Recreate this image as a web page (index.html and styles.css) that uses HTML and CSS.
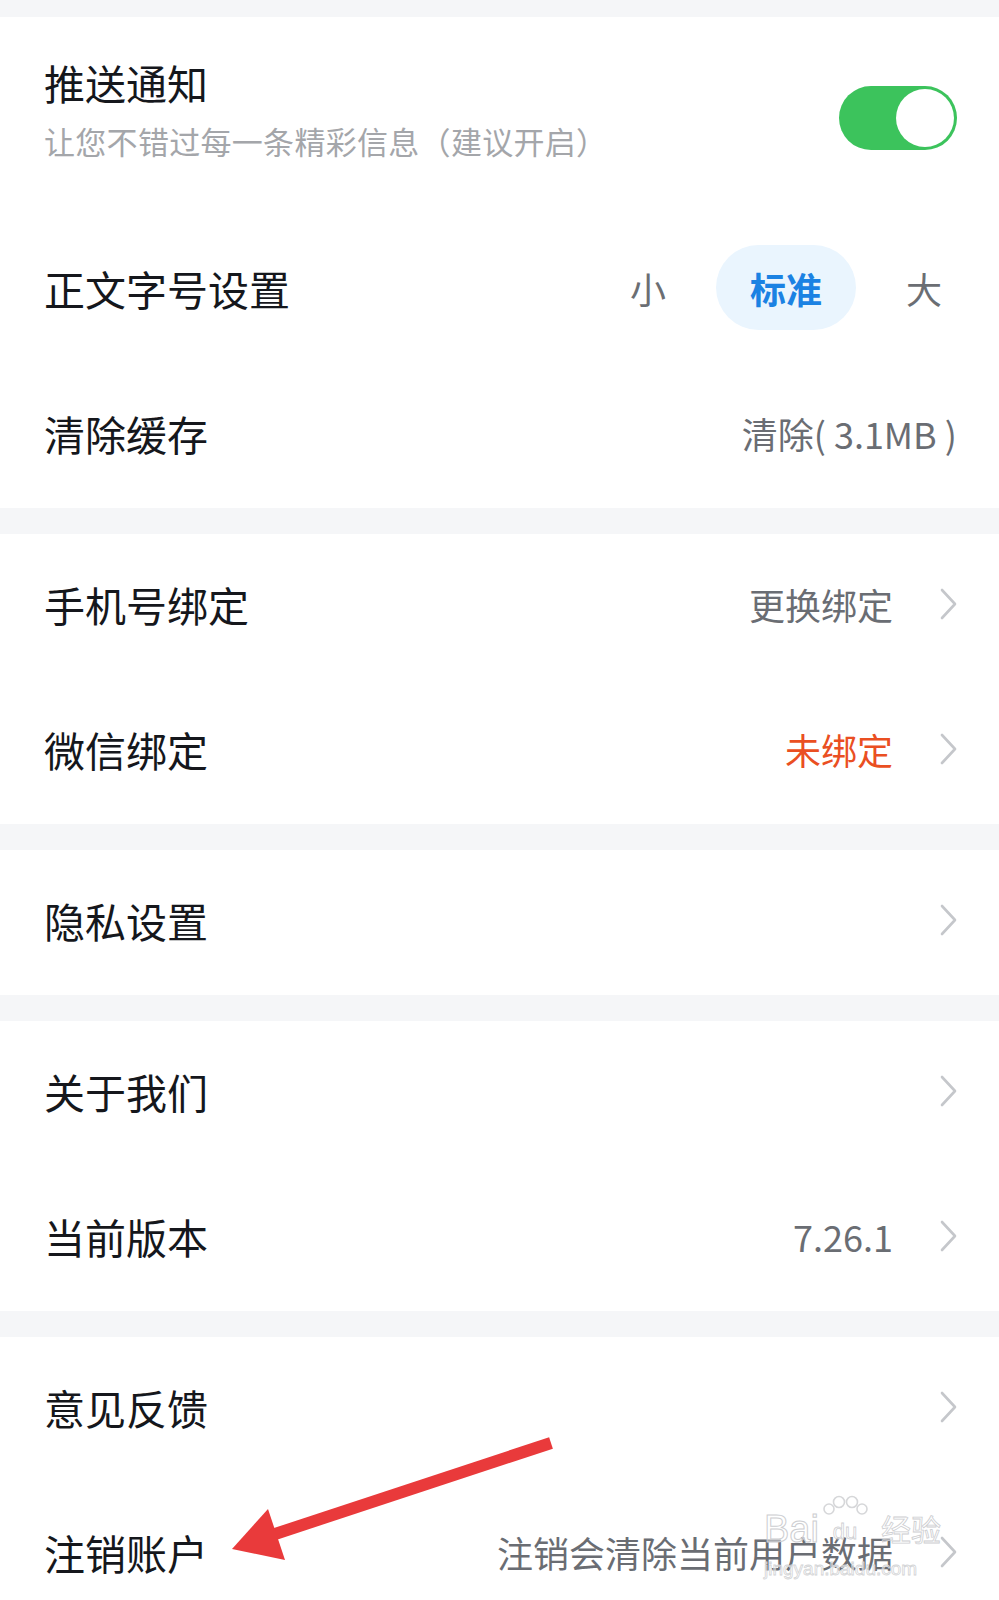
FILE: index.html
```html
<!DOCTYPE html>
<html lang="zh-CN">
<head>
  <meta charset="UTF-8">
  <meta name="viewport" content="width=device-width, initial-scale=1.0">
  <title>设置</title>
  <link rel="stylesheet" href="styles.css">
</head>
<body>
  <div class="page">
    <div class="group">
      <div class="row row-tall">
        <div class="row-text">
          <div class="row-title">推送通知</div>
          <div class="row-sub">让您不错过每一条精彩信息（建议开启）</div>
        </div>
        <span class="switch on"><span class="knob"></span></span>
      </div>
      <div class="row">
        <div class="row-title">正文字号设置</div>
        <div class="size-picker">
          <span class="size-opt">小</span>
          <span class="size-opt active">标准</span>
          <span class="size-opt">大</span>
        </div>
      </div>
      <div class="row">
        <div class="row-title">清除缓存</div>
        <span class="row-value">清除( 3.1MB )</span>
      </div>
    </div>

    <div class="group">
      <div class="row">
        <div class="row-title">手机号绑定</div>
        <div class="row-end">
          <span class="row-value">更换绑定</span>
          <svg class="chevron" viewBox="0 0 17 32"><path d="M2 2 L15 16 L2 30"/></svg>
        </div>
      </div>
      <div class="row">
        <div class="row-title">微信绑定</div>
        <div class="row-end">
          <span class="row-value warn">未绑定</span>
          <svg class="chevron" viewBox="0 0 17 32"><path d="M2 2 L15 16 L2 30"/></svg>
        </div>
      </div>
    </div>

    <div class="group">
      <div class="row">
        <div class="row-title">隐私设置</div>
        <svg class="chevron" viewBox="0 0 17 32"><path d="M2 2 L15 16 L2 30"/></svg>
      </div>
    </div>

    <div class="group">
      <div class="row">
        <div class="row-title">关于我们</div>
        <svg class="chevron" viewBox="0 0 17 32"><path d="M2 2 L15 16 L2 30"/></svg>
      </div>
      <div class="row">
        <div class="row-title">当前版本</div>
        <div class="row-end">
          <span class="row-value">7.26.1</span>
          <svg class="chevron" viewBox="0 0 17 32"><path d="M2 2 L15 16 L2 30"/></svg>
        </div>
      </div>
    </div>

    <div class="group">
      <div class="row">
        <div class="row-title">意见反馈</div>
        <svg class="chevron" viewBox="0 0 17 32"><path d="M2 2 L15 16 L2 30"/></svg>
      </div>
      <div class="row">
        <div class="row-title">注销账户</div>
        <div class="row-end">
          <span class="row-value">注销会清除当前用户数据</span>
          <svg class="chevron" viewBox="0 0 17 32"><path d="M2 2 L15 16 L2 30"/></svg>
        </div>
      </div>
    </div>

    <!-- red annotation arrow drawn over the screenshot -->
    <svg class="annotation" viewBox="0 0 999 1600">
      <line x1="551" y1="1443" x2="272" y2="1535"/>
      <polygon points="232,1549 268,1509 285,1560"/>
    </svg>

    <div class="watermark">
      <div class="wm-main">
        <span class="wm-bai">Bai</span>
        <span class="wm-paw">
          <svg viewBox="0 0 50 24">
            <circle cx="9" cy="14" r="5"/>
            <circle cx="19" cy="7" r="5.5"/>
            <circle cx="32" cy="7" r="5.5"/>
            <circle cx="42" cy="14" r="5"/>
          </svg>
          <span class="wm-du">du</span>
        </span>
        <span class="wm-jy">经验</span>
      </div>
      <div class="wm-url">jingyan.baidu.com</div>
    </div>
  </div>
</body>
</html>
```

FILE: styles.css
```css
body {
  margin: 0;
  padding: 0;
  background-color: #f5f6f8;
  font-family: "Noto Sans CJK SC", "Noto Sans", sans-serif;
}

.page {
  position: relative;
  width: 999px;
  height: 1600px;
  padding-top: 17px;
  box-sizing: border-box;
  overflow: hidden;
}

.group {
  background-color: #fff;
  margin-bottom: 26px;
}

.row {
  display: flex;
  align-items: center;
  justify-content: space-between;
  height: 145px;
  padding: 0 42px 6px 44px;
  box-sizing: border-box;
}

.row-tall {
  height: 201px;
  padding-bottom: 18px;
}

.row-title {
  font-size: 41px;
  line-height: 56px;
  color: #15171c;
}

.row-sub {
  margin-top: 9px;
  font-size: 31px;
  line-height: 44px;
  color: #a4a6aa;
  letter-spacing: 0.3px;
}

.row-end {
  display: flex;
  align-items: center;
  gap: 47px;
}

.row-value {
  font-size: 36px;
  line-height: 50px;
  color: #6a6d73;
}

.row-value.warn {
  color: #ea4f22;
}

.chevron {
  width: 17px;
  height: 32px;
  fill: none;
  stroke: #c5c7cb;
  stroke-width: 2.6;
  stroke-linecap: round;
  stroke-linejoin: round;
}

.switch {
  display: flex;
  justify-content: flex-end;
  align-items: center;
  width: 118px;
  height: 64px;
  padding: 3px;
  box-sizing: border-box;
  border-radius: 32px;
  background-color: #3cc35c;
}

.row-tall .switch {
  margin-top: 18px;
}

.knob {
  width: 58px;
  height: 58px;
  border-radius: 50%;
  background-color: #fff;
}

.size-picker {
  display: flex;
  align-items: center;
  gap: 16px;
  margin-right: -19px;
}

.size-opt {
  display: flex;
  align-items: center;
  justify-content: center;
  height: 85px;
  padding: 0 34px;
  border-radius: 43px;
  font-size: 36px;
  color: #6b6e73;
}

.size-opt.active {
  background-color: #eaf5fe;
  color: #1b82e3;
  font-weight: 700;
}

.annotation {
  position: absolute;
  left: 0;
  top: 0;
  width: 999px;
  height: 1600px;
  pointer-events: none;
}

.annotation line {
  stroke: #e93a3b;
  stroke-width: 12;
}

.annotation polygon {
  fill: #e93a3b;
}

.watermark {
  position: absolute;
  left: 764px;
  top: 1491px;
  width: 184px;
  pointer-events: none;
  color: rgba(255, 255, 255, 0.45);
}

.wm-main {
  display: flex;
  align-items: flex-end;
  height: 54px;
}

.wm-bai {
  font-family: "Liberation Sans", sans-serif;
  font-size: 38px;
  line-height: 32px;
  -webkit-text-stroke: 1px #cdced1;
}

.wm-paw {
  display: flex;
  flex-direction: column;
  align-items: center;
  width: 52px;
}

.wm-paw svg {
  width: 50px;
  height: 24px;
  fill: none;
  stroke: #d6d7d9;
  stroke-width: 1.6;
}

.wm-du {
  font-family: "Liberation Sans", sans-serif;
  font-size: 22px;
  line-height: 26px;
  -webkit-text-stroke: 0.8px #cfd0d3;
}

.wm-jy {
  margin-left: 10px;
  font-size: 30px;
  line-height: 34px;
  -webkit-text-stroke: 0.8px #cdced1;
}

.wm-url {
  margin-top: 14px;
  font-family: "Liberation Sans", sans-serif;
  font-size: 19px;
  line-height: 20px;
  -webkit-text-stroke: 0.8px #d3d4d6;
}
```
